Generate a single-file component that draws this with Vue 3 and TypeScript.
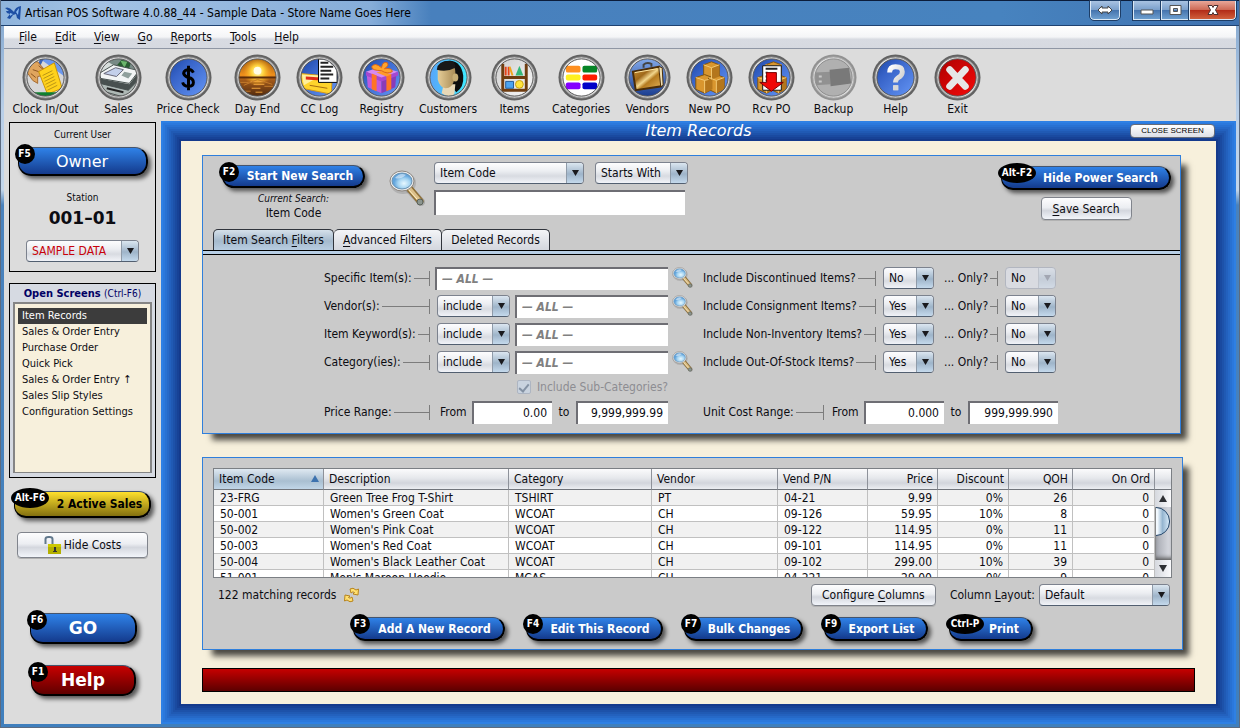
<script setup lang="ts">
import { ref } from 'vue'

interface Tool { id: string; label: string; size?: string; disabled?: boolean }
interface FilterRow { id: string; label: string; mode: boolean; lookup: boolean }
interface IncludeRow { id: string; label: string; value: string; locked?: boolean }
interface Action { key: string; label: string; size: string; oval?: boolean }

const menus = ['File', 'Edit', 'View', 'Go', 'Reports', 'Tools', 'Help']

const tools: Tool[] = [
  { id: 'clock', label: 'Clock In/Out', size: 'xl' },
  { id: 'sales', label: 'Sales' },
  { id: 'price', label: 'Price Check', size: 'lg' },
  { id: 'day', label: 'Day End' },
  { id: 'log', label: 'CC Log' },
  { id: 'registry', label: 'Registry' },
  { id: 'customers', label: 'Customers', size: 'md' },
  { id: 'items', label: 'Items' },
  { id: 'categories', label: 'Categories', size: 'md' },
  { id: 'vendors', label: 'Vendors' },
  { id: 'newpo', label: 'New PO' },
  { id: 'rcvpo', label: 'Rcv PO' },
  { id: 'backup', label: 'Backup', disabled: true },
  { id: 'help', label: 'Help' },
  { id: 'exit', label: 'Exit' },
]

const screens = [
  'Item Records', 'Sales & Order Entry', 'Purchase Order', 'Quick Pick',
  'Sales & Order Entry ↑', 'Sales Slip Styles', 'Configuration Settings',
]
const current = ref(0)
const tab = ref(0)

const filters: FilterRow[] = [
  { id: 'specific', label: 'Specific Item(s):', mode: false, lookup: true },
  { id: 'vendor', label: 'Vendor(s):', mode: true, lookup: true },
  { id: 'keyword', label: 'Item Keyword(s):', mode: true, lookup: false },
  { id: 'category', label: 'Category(ies):', mode: true, lookup: true },
]
const includes: IncludeRow[] = [
  { id: 'disc', label: 'Include Discontinued Items?', value: 'No', locked: true },
  { id: 'cons', label: 'Include Consignment Items?', value: 'Yes' },
  { id: 'noninv', label: 'Include Non-Inventory Items?', value: 'Yes' },
  { id: 'oos', label: 'Include Out-Of-Stock Items?', value: 'Yes' },
]

const heads = ['Item Code', 'Description', 'Category', 'Vendor', 'Vend P/N', 'Price', 'Discount', 'QOH', 'On Ord']
const rows = [
  ['23-FRG', 'Green Tree Frog T-Shirt', 'TSHIRT', 'PT', '04-21', '9.99', '0%', '26', '0'],
  ['50-001', "Women's Green Coat", 'WCOAT', 'CH', '09-126', '59.95', '10%', '8', '0'],
  ['50-002', "Women's Pink Coat", 'WCOAT', 'CH', '09-122', '114.95', '0%', '11', '0'],
  ['50-003', "Women's Red Coat", 'WCOAT', 'CH', '09-101', '114.95', '0%', '11', '0'],
  ['50-004', "Women's Black Leather Coat", 'WCOAT', 'CH', '09-102', '299.00', '10%', '39', '0'],
  ['51-001', "Men's Maroon Hoodie", 'MCAS', 'CH', '04-221', '29.00', '0%', '9', '0'],
]

const actions: Action[] = [
  { key: 'F3', label: 'Add A New Record', size: 'a' },
  { key: 'F4', label: 'Edit This Record', size: 'b' },
  { key: 'F7', label: 'Bulk Changes', size: 'c' },
  { key: 'F9', label: 'Export List', size: 'd' },
  { key: 'Ctrl-P', label: 'Print', size: 'e', oval: true },
]
</script>

<template>
  <div class="window">
    <svg class="defs" aria-hidden="true">
      <defs>
        <linearGradient id="rim" x1="0" y1="0" x2="1" y2="1"><stop offset="0" stop-color="#fff" /><stop offset=".5" stop-color="#bbb" /><stop offset="1" stop-color="#f4f4f4" /></linearGradient>
        <linearGradient id="blue" x1="0" y1="0" x2="1" y2="1"><stop offset="0" stop-color="#123a94" /><stop offset=".35" stop-color="#3763c8" /><stop offset="1" stop-color="#6ea0ff" /></linearGradient>
        <linearGradient id="navy" x1="0" y1="0" x2="0" y2="1"><stop offset="0" stop-color="#8fb6f4" /><stop offset="1" stop-color="#0c2f84" /></linearGradient>
        <linearGradient id="pale" x1="0" y1="0" x2="1" y2="1"><stop offset="0" stop-color="#c8c8c8" /><stop offset="1" stop-color="#fff" /></linearGradient>
        <linearGradient id="sky" x1="0" y1="0" x2="0" y2="1"><stop offset="0" stop-color="#7a430c" /><stop offset=".45" stop-color="#f0901c" /><stop offset=".55" stop-color="#a35a1a" /><stop offset="1" stop-color="#3a1d0c" /></linearGradient>
        <radialGradient id="sun"><stop offset="0" stop-color="#fffde0" /><stop offset=".4" stop-color="#ffd640" /><stop offset="1" stop-color="#ffa51a" stop-opacity="0" /></radialGradient>
        <linearGradient id="cyan"><stop offset="0" stop-color="#5b9cf8" /><stop offset="1" stop-color="#3cf2ff" /></linearGradient>
        <linearGradient id="face"><stop offset="0" stop-color="#e5cd98" /><stop offset="1" stop-color="#a98b55" /></linearGradient>
        <linearGradient id="gold" x1="0" y1="0" x2="1" y2="1"><stop offset="0" stop-color="#c98f34" /><stop offset=".35" stop-color="#a0691a" /><stop offset=".5" stop-color="#f2d68c" /><stop offset=".6" stop-color="#b57b20" /><stop offset="1" stop-color="#e6b65c" /></linearGradient>
        <linearGradient id="red" x1="0" y1="0" x2="1" y2="1"><stop offset="0" stop-color="#a40000" /><stop offset="1" stop-color="#ff0a0a" /></linearGradient>
        <linearGradient id="white" x1="0" y1="0" x2="1" y2="1"><stop offset="0" stop-color="#fff" /><stop offset="1" stop-color="#c4c4c4" /></linearGradient>
        <radialGradient id="lens" cx=".6" cy=".65"><stop offset="0" stop-color="#e8f8ff" /><stop offset=".6" stop-color="#a5d4f2" /><stop offset="1" stop-color="#62a4dc" /></radialGradient>
        <clipPath id="disc"><circle cx="24" cy="24" r="19" /></clipPath>
        <symbol id="magnifier" viewBox="0 0 36 38">
          <ellipse cx="14" cy="13" rx="13" ry="11" fill="#666" opacity=".25" />
          <path d="M20 19 32 32" stroke="#777" stroke-width="8" stroke-linecap="round" opacity=".35" />
          <path d="M20 18 31 31" stroke="#8f7038" stroke-width="7" stroke-linecap="round" />
          <path d="M20 18 31 31" stroke="#dcc08a" stroke-width="4" stroke-linecap="round" />
          <path d="m19 19 9 10" stroke="#fff0c4" stroke-width="1" />
          <circle cx="31" cy="32" r="3" fill="#8c9690" stroke="#596058" />
          <ellipse cx="13" cy="11" rx="12" ry="10" fill="#eee" stroke="#8c8680" />
          <ellipse cx="13" cy="11" rx="10" ry="8" fill="url(#lens)" stroke="#6b92b0" />
          <path d="M6 8q5-6 11-3-6 5-11 3z" fill="#fff" opacity=".5" />
        </symbol>
      </defs>
    </svg>

    <header class="titlebar">
      <svg class="logo" viewBox="0 0 16 14" aria-hidden="true">
        <path d="M0 2q4-2 8 3l1 1q1-5 7-6l-1 14-3-2-1-4-3 1-3 4-3-1 3-4-3-1-1-2 3 0z" fill="#1e4fa4" />
        <path d="M5 7 8 8 5 10zM11 6l3-4-1 7z" fill="#8fbdf0" />
      </svg>
      <h1>Artisan POS Software 4.0.88_44 - Sample Data - Store Name Goes Here</h1>
      <div class="captions">
        <button class="cap span" aria-label="Move window">
          <svg viewBox="0 0 16 10"><path d="M1 5 5 1v2h6V1l4 4-4 4V7H5v2z" fill="#fff" stroke="#444" /></svg>
        </button>
        <div class="cap-group">
          <button class="cap" aria-label="Minimize"><svg viewBox="0 0 16 10"><path d="M2 5h12v4H2z" fill="#fff" stroke="#555" /></svg></button>
          <button class="cap" aria-label="Maximize"><svg viewBox="0 0 16 10"><path d="M3 .5h11v9H3zM6.500 3.500h4v3h-4z" fill="#fff" fill-rule="evenodd" stroke="#555" /></svg></button>
          <button class="cap close" aria-label="Close"><svg viewBox="0 0 16 10"><path d="M3 .5h4l1 2 1-2h4L10.500 5 13 9.500H9l-1-2-1 2H3L5.500 5z" fill="#fff" stroke="#4c3030" /></svg></button>
        </div>
      </div>
    </header>

    <nav class="menubar">
      <button v-for="m in menus" :key="m"><u>{{ m[0] }}</u>{{ m.slice(1) }}</button>
    </nav>

    <div class="toolbar">
      <button v-for="t in tools" :key="t.id" class="tool" :class="[t.size, { faded: t.disabled }]">
        <svg viewBox="0 0 48 48" aria-hidden="true">
          <circle cx="24" cy="24" r="23.500" fill="#626262" />
          <circle cx="24" cy="24" r="21" fill="url(#rim)" stroke="#8a8a8a" />
          <g clip-path="url(#disc)">
            <g v-if="t.id === 'clock'">
              <path d="M0 0h48v48H0z" fill="#d8d8d8" /><path d="M17 4h28v20z" fill="#6c98ee" /><path d="m17 12 4-8" stroke="#3c64b8" stroke-width="3" />
              <path d="M3 8 16 8 23 16 21 22 16 23 16 30 11 27 6 20z" fill="#e0a55e" stroke="#a66c30" />
              <path d="m11 16 6 2M9 20l5 4M17 12l5 4" stroke="#8a5421" />
              <path d="M17 18 33 9 41 35 26 41z" fill="#ffd21c" stroke="#c99308" />
              <path d="m21 22 10-5M22 25l10-5M23 28l10-5M24 31l10-5M25 34l10-5M26 37l10-5" stroke="#b89416" />
              <path d="M0 39h48v9H0z" fill="#108030" />
            </g>
            <g v-else-if="t.id === 'sales'">
              <path d="M0 0h48v48H0z" fill="#d8dedc" /><path d="M6 4h38v12L20 12z" fill="#788a86" />
              <path d="m22 12 5-6 10 2-3 9z" fill="#285c30" /><path d="m26 7 7 1-3 6z" fill="#6ab56a" />
              <path d="m4 20 15-9 26 6-10 13-29-5z" fill="#f2f5f5" stroke="#46504e" /><path d="m9 20 12-6 8 2-7 7z" fill="#c3d0ea" stroke="#667" /><path d="m27 22 3-4 8 2-4 5z" fill="#8fa09c" />
              <path d="m5 25 30 6 10-13v7L35 38 5 31z" fill="#48504f" /><path d="m5 30 29 7 11-11v12L33 45 8 38z" fill="#aeb8b5" stroke="#48504f" /><path d="m12 35 17 4" stroke="#222" stroke-width="2" />
            </g>
            <g v-else-if="t.id === 'price'">
              <path d="M0 0h48v48H0z" fill="url(#blue)" />
              <path d="M29 19q-2-4-6-3-4 1-4 4 1 3 5 4 5 1 5 5 0 4-5 4t-6-4M24 12v25" fill="none" stroke="#000" stroke-width="3" />
            </g>
            <g v-else-if="t.id === 'day'">
              <path d="M0 0h48v48H0z" fill="url(#sky)" /><circle cx="24" cy="18" r="15" fill="url(#sun)" /><circle cx="24" cy="17" r="4" fill="#fffde8" />
              <path d="M0 24h48" stroke="#5c2c0a" stroke-width="2" /><path d="M17 28h14M20 31h11M18 35h9M22 39h7" stroke="#f0a43c" stroke-width="1" />
              <path d="M4 29h11M31 33h12M6 38h11M24 26 10 32M24 26l15 5" stroke="#c47a2a" />
            </g>
            <g v-else-if="t.id === 'log'">
              <path d="M0 0h48v48H0z" fill="url(#blue)" /><path d="m5 20 32 3-1 18-30-6z" fill="#ffd42c" stroke="#d79a14" /><path d="m6 21 20 1-18 10z" fill="#ffef9c" /><path d="m10 23 15 1v3l-15-1z" fill="#e02c18" /><path d="m14 32 18 3" stroke="#a66b12" />
              <path d="M23 5h19v24H23z" fill="#fff" stroke="#000" /><path d="M25 9h8M25 13h13M25 17h11M25 21h13M25 25h9" stroke="#222" stroke-width="2" /><path d="M36 5v5h6" fill="none" stroke="#000" />
            </g>
            <g v-else-if="t.id === 'registry'">
              <path d="M0 0h48v48H0z" fill="url(#blue)" /><path d="m9 22 15 5v13L10 34z" fill="#c05ade" /><path d="m24 27 15-5-1 12-14 6z" fill="#8a3bb8" />
              <path d="m8 18 15-5 18 5-17 7z" fill="#d68af0" /><path d="m8 18 16 6v4L8 22zM41 18l-17 6v4l17-6z" fill="#a647d0" />
              <path d="m14 20 5 2v16l-5-2zM29 22l5-2v16l-5 2z" fill="#ff7426" /><path d="m24 17 10 4-5 2-10-4z" fill="#ff9a2c" />
              <path d="M24 17q-10 0-10-4 3-5 10 1 1-7 6-5 2 3-3 6 8-1 8 3-5 3-11-1z" fill="#ffa42c" stroke="#d8631a" />
            </g>
            <g v-else-if="t.id === 'customers'">
              <path d="M0 0h48v48H0z" fill="url(#cyan)" />
              <path d="M14 15q1-8 12-8 11 1 13 15 1 12-7 17l-7-8z" fill="#0d0d0d" />
              <path d="M19 31h12l-1 10-6 3-7-4z" fill="#e8d8b6" />
              <path d="M13 16q10 1 17-3 2 6 0 13-2 9-9 9-6-1-8-9z" fill="url(#face)" /><ellipse cx="31" cy="24" rx="3" ry="4" fill="#c7ad74" />
              <path d="M12 16q1-9 13-9 6 0 6 7-9 5-19 2z" fill="#181818" />
            </g>
            <g v-else-if="t.id === 'items'">
              <path d="M0 0h48v48H0z" fill="url(#pale)" /><path d="M12 10v28M36 10v28M11 24h26M11 37h26" stroke="#6f3d10" stroke-width="3" />
              <path d="M15 13v9M18 13v9" stroke="#e44218" stroke-width="2" /><path d="m19 13 3 9" stroke="#f0a418" stroke-width="2" /><path d="m29 12 4 10h-8z" fill="#35b878" />
              <path d="M15 28h8v7h-8z" fill="#4ba3f0" stroke="#225a98" /><circle cx="29" cy="31" r="4" fill="#ffe33c" stroke="#c8a010" />
            </g>
            <g v-else-if="t.id === 'categories'">
              <path d="M0 0h48v48H0z" fill="#fff" />
              <rect x="8" y="12" width="15" height="7" rx="2" fill="#ff9020" /><rect x="25" y="12" width="15" height="7" rx="2" fill="#068426" />
              <rect x="8" y="21" width="15" height="6" rx="2" fill="#fff020" /><rect x="25" y="21" width="15" height="6" rx="2" fill="#ff1c00" />
              <rect x="8" y="29" width="15" height="7" rx="2" fill="#8400ff" /><rect x="25" y="29" width="15" height="7" rx="2" fill="#0000c8" />
            </g>
            <g v-else-if="t.id === 'vendors'">
              <path d="M0 0h48v48H0z" fill="url(#navy)" /><path d="M20 14v-3q3-3 8-1v3" fill="none" stroke="#444" stroke-width="2" />
              <path d="m9 18 27-5 2 20-26 4z" fill="url(#gold)" stroke="#4b2d08" stroke-width="2" /><path d="m11 19 23-4" stroke="#ffe7a4" /><path d="m36 13 3 1 1 18-2 1" fill="#efe0b4" stroke="#4b2d08" />
            </g>
            <g v-else-if="t.id === 'newpo' || t.id === 'rcvpo'">
              <path d="M0 0h48v48H0z" fill="url(#blue)" />
              <g stroke="#815510" fill="#d9962e"><path d="m18 11 8-3 8 3v12l-8 3-8-3z" /><path d="m10 24 9-3 8 3v12l-8 4-9-4z" /><path d="m23 24 8-3 8 3v12l-8 4-8-4z" /></g>
              <path d="m26 14 8-3v12l-8 3zM19 27l8-3v12l-8 4zM31 27l8-3v12l-8 4z" fill="#b4761c" />
              <path d="m18 11 8 3 8-3M10 24l9 3 4-1M23 24l8 3 8-3M19 27v13M31 27v13M26 14v12" fill="none" stroke="#f4ca74" />
              <g v-if="t.id === 'rcvpo'"><path d="M15 12h19v25H15z" fill="#fff" stroke="#111" /><path d="M18 15h12M18 19h2M18 23h2M18 27h2" stroke="#222" stroke-width="2" /><path d="M19 19h10v10h7L24 38 12 29h7z" fill="#f00808" stroke="#700" /></g>
            </g>
            <g v-else-if="t.id === 'backup'"><path d="M0 0h48v48H0z" fill="#949494" /><path d="m5 19 16-1v13l-15 1z" fill="#606060" /><path d="M9 22h3v2H9zM9 27h3v2H9z" fill="#bbb" /><path d="m20 16 20-2 2 16-21 3z" fill="#383838" /></g>
            <g v-else-if="t.id === 'help'"><path d="M0 0h48v48H0z" fill="url(#blue)" /><path d="M18 19q0-6 6-6 7 0 7 5 0 4-4 6-3 2-3 5M24 32v5" fill="none" stroke="url(#white)" stroke-width="5" /><path d="M22 32h5v5h-5z" fill="#d8d8d8" /></g>
            <g v-else><path d="M0 0h48v48H0z" fill="url(#red)" /><path d="m16 16 16 17M32 16 16 33" stroke="#e6e6e6" stroke-width="7" stroke-linecap="round" /></g>
          </g>
          <circle cx="24" cy="24" r="19" fill="none" stroke="#555" />
        </svg>
        <span>{{ t.label }}</span>
      </button>
    </div>

    <div class="body">
      <aside class="sidebar">
        <section class="box user">
          <p class="small">Current User</p>
          <button class="pill owner"><span class="badge">F5</span>Owner</button>
          <p class="small station">Station</p>
          <p class="number">001–01</p>
          <span class="combo sample"><select aria-label="Database"><option>SAMPLE DATA</option></select></span>
        </section>
        <section class="box open">
          <h2>Open Screens <span>(Ctrl-F6)</span></h2>
          <ul>
            <li v-for="(s, i) in screens" :key="i"><button :class="{ on: current === i }" @click="current = i">{{ s }}</button></li>
          </ul>
        </section>
        <button class="pill gold"><span class="badge oval">Alt-F6</span>2 Active Sales</button>
        <button class="plain hide-costs">
          <svg viewBox="0 0 17 19" aria-hidden="true"><path d="M1.500 8V3q0-2 3-2h1q3 0 3 2v6" fill="none" stroke="#61788c" stroke-width="2" /><path d="M4 8h13v10H4z" fill="#b4b000" /><path d="M4 8h13v3H4z" fill="#ccc800" /><path d="M10 11h2v5h-2zM9 15h4v1H9z" fill="#333" /></svg>
          Hide Costs
        </button>
        <button class="pill go"><span class="badge">F6</span>GO</button>
        <button class="pill help"><span class="badge">F1</span>Help</button>
      </aside>

      <main class="frame">
        <div class="frame-title">
          <h2>Item Records</h2>
          <button>CLOSE SCREEN</button>
        </div>
        <div class="canvas">
          <section class="panel search">
            <div class="search-top">
              <div class="starter">
                <button class="pill start"><span class="badge">F2</span>Start New Search</button>
                <em>Current Search:</em>
                <span class="current">Item Code</span>
              </div>
              <svg class="big-mag" aria-hidden="true"><use href="#magnifier" /></svg>
              <div class="query">
                <div class="query-row">
                  <span class="combo code"><select aria-label="Search field"><option>Item Code</option></select></span>
                  <span class="combo starts"><select aria-label="Match type"><option>Starts With</option></select></span>
                </div>
                <input class="field query-text" type="text" aria-label="Search text">
              </div>
              <div class="power">
                <button class="pill hide-power"><span class="badge oval">Alt-F2</span>Hide Power Search</button>
                <button class="plain save"><span><u>S</u>ave Search</span></button>
              </div>
            </div>

            <div class="tabs" role="tablist">
              <button role="tab" :class="{ on: tab === 0 }" @click="tab = 0">Item Search <u>F</u>ilters</button>
              <button role="tab" :class="{ on: tab === 1 }" @click="tab = 1"><u>A</u>dvanced Filters</button>
              <button role="tab" :class="{ on: tab === 2 }" @click="tab = 2">Deleted Records</button>
            </div>
            <div class="tab-line"></div>

            <div class="filters">
              <div class="left">
                <div v-for="f in filters" :key="f.id" class="row">
                  <label class="lead" :for="f.id">{{ f.label }}<i class="rule"></i></label>
                  <span v-if="f.mode" class="combo mode"><select :aria-label="f.label + ' mode'"><option>include</option></select></span>
                  <input :id="f.id" class="field all" :class="{ long: !f.mode }" type="text" placeholder="— ALL —">
                  <button v-if="f.lookup" class="lookup" :aria-label="'Look up ' + f.label"><svg aria-hidden="true"><use href="#magnifier" /></svg></button>
                </div>
                <div class="row sub"><label><input type="checkbox" checked disabled><span class="tick"></span>Include Sub-Categories?</label></div>
                <div class="row">
                  <span class="lead">Price Range:<i class="rule"></i></span>
                  <label class="from" for="p1">From</label><input id="p1" class="field num n80" type="text" value="0.00">
                  <label class="to" for="p2">to</label><input id="p2" class="field num n92" type="text" value="9,999,999.99">
                </div>
              </div>
              <div class="right">
                <div v-for="n in includes" :key="n.id" class="row">
                  <label class="lead wide" :for="n.id">{{ n.label }}<i class="rule"></i></label>
                  <span class="combo yn"><select :id="n.id"><option>{{ n.value }}</option></select></span>
                  <label class="only" :for="n.id + '-only'">... Only?<i class="rule"></i></label>
                  <span class="combo yn" :class="{ off: n.locked }"><select :id="n.id + '-only'" :disabled="n.locked"><option>No</option></select></span>
                </div>
                <div class="row sub"></div>
                <div class="row">
                  <span class="lead cost">Unit Cost Range:<i class="rule"></i></span>
                  <label class="from" for="c1">From</label><input id="c1" class="field num n80" type="text" value="0.000">
                  <label class="to" for="c2">to</label><input id="c2" class="field num n90" type="text" value="999,999.990">
                </div>
              </div>
            </div>
          </section>

          <section class="panel results">
            <div class="grid">
              <div class="viewport">
                <table>
                  <colgroup><col class="c110"><col><col class="c143"><col class="c126"><col class="c90"><col class="c70"><col class="c71"><col class="c64"><col class="c82"></colgroup>
                  <thead><tr><th v-for="(h, i) in heads" :key="h" scope="col" :class="{ r: i > 4, sorted: i === 0 }">{{ h }}</th></tr></thead>
                  <tbody><tr v-for="r in rows" :key="r[0]"><td v-for="(c, i) in r" :key="i" :class="{ r: i > 4 }">{{ c }}</td></tr></tbody>
                </table>
              </div>
              <div class="scroll">
                <div class="corner"></div>
                <button class="up" aria-label="Scroll up"></button>
                <div class="track"><div class="thumb"></div></div>
                <button class="down" aria-label="Scroll down"></button>
              </div>
            </div>
            <div class="status">
              <span>122 matching records</span>
              <button class="refresh" aria-label="Refresh"><svg viewBox="0 0 15 16"><path d="M6 2q3-2 6 1l2.500-1-.5 6-5-1 1.500-1.500Q9 4 7 6z" fill="#ffe070" stroke="#b8841c" /><path d="M9 14q-3 2-6-1L.5 14 1 8l5 1-1.500 1.500Q6 12 8 10z" fill="#ffe070" stroke="#b8841c" /></svg></button>
              <button class="plain configure"><span>Configure <u>C</u>olumns</span></button>
              <label for="layout">Column <u>L</u>ayout:</label>
              <span class="combo layout"><select id="layout"><option>Default</option></select></span>
            </div>
            <div class="actions">
              <button v-for="a in actions" :key="a.key" class="pill" :class="'w-' + a.size"><span class="badge" :class="{ oval: a.oval }">{{ a.key }}</span>{{ a.label }}</button>
            </div>
          </section>
          <div class="message"></div>
        </div>
      </main>
    </div>
  </div>
</template>

<style>
html, body { margin: 0; background: #4b82bd; }
</style>

<style scoped>
* { box-sizing: border-box; }
.window {
  min-height: 100vh; display: flex; flex-direction: column; padding: 0 3px 3px; position: relative;
  background: linear-gradient(#7ca2cc, #b9cfe8 110px, #c3d6ea 190px, #4a82bc 205px, #3f7fbd);
  font: 12px/16px 'DejaVu Sans Condensed', 'DejaVu Sans', sans-serif; color: #0c0c12;
  border-left: 1px solid #5c6b80; border-right: 1px solid #5c6b80; border-bottom: 1px solid #5c6b80;
}
.defs { position: absolute; width: 0; height: 0; }
button, input, select { font: inherit; color: inherit; margin: 0; }
button { padding: 0; border: 0; background: none; white-space: nowrap; }
p, h1, h2, ul { margin: 0; padding: 0; }
u { text-underline-offset: 2px; }

.titlebar {
  display: flex; height: 26px; margin: 0 -3px; padding: 0 3px 0 4px; border-top: 1px solid #0b1c3a; border-bottom: 1px solid #1f4271;
  background: linear-gradient(90deg, #8fb4dc, #a3c2e4 100px, #86add9 370px, #4880bd 430px, #4783bf 1000px, #3f72b0);
}
.logo { width: 16px; height: 14px; margin-top: 5px; }
.titlebar h1 { flex: 1; font-size: 12px; font-weight: 400; line-height: 24px; margin-left: 4px; color: #000; }
.captions { display: flex; gap: 13px; }
.cap-group { display: flex; }
.cap { width: 28px; height: 19px; display: grid; place-items: center; border: 1px solid #dce9f6; border-top: 0; outline: 1px solid #1d3d66; background: linear-gradient(#a9c3e2, #7ba0cc 48%, #4674ae 52%, #6e9fcf); }
.cap svg { width: 16px; height: 10px; }
.cap.span { width: 30px; border-radius: 0 0 4px 4px; }
.cap.close { width: 47px; border-radius: 0 0 4px 0; background: linear-gradient(#e8a799, #ce6a56 48%, #b22c18 52%, #d0603c); }

.menubar { display: flex; gap: 18px; height: 23px; padding: 0 15px; background: linear-gradient(#fff, #f4f5f7 50%, #d8dbe2 60%, #d6d9e0); border-bottom: 1px solid #8f96a4; }
.menubar button { line-height: 21px; }

.toolbar { display: flex; gap: 15px; height: 72px; padding: 5px 7px 0; background: #dcdcdc; }
.tool { width: 47px; flex: none; display: flex; flex-direction: column; align-items: center; }
.tool.xl { width: 69px; } .tool.lg { width: 62px; } .tool.md { width: 56px; }
.tool svg { width: 47px; height: 47px; flex: none; }
.tool span { line-height: 17px; }
.faded svg { opacity: .6; }

.body { flex: 1; display: flex; background: #dcdcdc; }
.sidebar { width: 157px; flex: none; padding: 1px 5px 0; display: flex; flex-direction: column; }
.box { border: 1px solid #000; display: flex; flex-direction: column; align-items: center; }
.user { height: 150px; }
.small { font-size: 10px; line-height: 14px; margin-top: 5px; }
.station { margin-top: 15px; }
.number { font: bold 17px/22px 'DejaVu Sans', sans-serif; margin-top: 2px; margin-bottom: 11px; }
.open { height: 195px; margin-top: 11px; background: #d6dae2; padding: 2px 3px 4px; align-items: stretch; }
.open h2 { font-size: 11px; line-height: 16px; text-align: center; color: #000064; white-space: nowrap; }
.open h2 span { font-weight: 400; font-size: 10px; }
.open ul { flex: 1; list-style: none; background: #f7f0dc; border: 2px solid #858585; border-bottom-width: 1px; padding: 4px 3px; }
.open li button { display: block; width: 100%; height: 16px; line-height: 16px; font-size: 11px; text-align: left; padding-left: 4px; color: #0c0c12; }
.open li .on { background: #3c3c3c; color: #fff; }

.pill {
  position: relative; height: 24px; flex: none; border: 1px solid #000; border-top-color: #45556e; border-right-width: 2px; border-bottom-width: 2px; border-radius: 12px;
  background: linear-gradient(#2f82e8, #143a8c); color: #fff; font-weight: bold; text-align: center; padding-left: 14px; box-shadow: 3px 3px 4px rgba(0, 0, 0, .6);
}
.badge { position: absolute; left: -4px; top: -4px; width: 20px; height: 20px; border-radius: 50%; background: #000; color: #fff; font: bold 10px/20px 'DejaVu Sans Condensed', sans-serif; text-align: center; }
.badge.oval { width: 38px; }
.owner { width: 130px; height: 29px; margin-top: 5px; padding-left: 0; font: 16px 'DejaVu Sans', sans-serif; border-radius: 13px; }
.gold { width: 137px; height: 27px; margin: 13px 0 0 5px; padding-left: 35px; background: linear-gradient(#ffe02c, #837010); color: #000; }
.go, .help { height: 31px; padding: 0; border-radius: 13px; font: bold 17px 'DejaVu Sans', sans-serif; }
.go { width: 107px; margin: 55px 0 0 21px; }
.help { width: 105px; margin: 21px 0 0 22px; background: linear-gradient(#c80000, #600000); }
.plain { display: flex; align-items: center; justify-content: center; border: 1px solid #80848c; border-radius: 4px; background: linear-gradient(#fdfdfe, #eceef2 45%, #d4d7de 60%, #f2f5fa); box-shadow: 0 1px 0 #b2b2b2; }
.hide-costs { width: 131px; height: 26px; margin: 14px 0 0 8px; gap: 3px; }
.hide-costs svg { width: 17px; height: 19px; }

.combo { position: relative; flex: none; display: block; height: 22px; border: 1px solid #7c828e; border-bottom-color: #525f70; border-radius: 4px; overflow: hidden; background: linear-gradient(#fdfdfe, #eceef2 40%, #d8dbe1 65%, #f1f3f8); }
.combo select { appearance: none; display: block; width: 100%; height: 20px; border: 0; background: none; padding: 0 18px 0 5px; outline: 0; opacity: 1; white-space: nowrap; }
.combo::before { content: ''; position: absolute; right: 0; top: 0; bottom: 0; width: 16px; border-left: 1px solid #8f9ba9; background: linear-gradient(#dbe6f0, #9eb4c9 55%, #c4d9ec); pointer-events: none; }
.combo::after { content: ''; position: absolute; right: 4px; top: 7px; width: 7px; height: 6px; background: #1a1a1e; clip-path: polygon(0 0, 100% 0, 50% 100%); pointer-events: none; }
.combo.off { border-color: #b2b6c0; background: #d9dbe1; }
.combo.off::before { opacity: .35; } .combo.off::after { background: #a2a6b2; }
.sample { width: 113px; color: #c8000a; }

.frame {
  flex: 1; min-width: 0; padding: 0 20px 20px; display: flex; flex-direction: column; background: #143a8c;
  box-shadow: inset 0 0 0 2px #2e80e4, inset 0 0 0 4px #2b78dc, inset 0 0 0 6px #2871d2, inset 0 0 0 8px #2669c8, inset 0 0 0 10px #2361be, inset 0 0 0 12px #205ab4, inset 0 0 0 14px #1d52aa, inset 0 0 0 16px #1a4aa0, inset 0 0 0 18px #174296, inset 0 0 0 20px #143a8c;
}
.frame-title { height: 20px; display: grid; grid-template-columns: 86px 1fr 86px; flex: none; }
.frame-title h2 { grid-column: 2; text-align: center; font: italic 16px/20px 'DejaVu Sans', sans-serif; color: #fff; }
.frame-title button { width: 85px; height: 14px; margin: 3px 0 0; border: 1px solid #666b78; border-radius: 4px; background: linear-gradient(#fff, #dcdfe6); font: 8px/12px 'Liberation Sans', Arial, sans-serif; color: #000; }
.canvas { flex: 1; background: #f7f0dc; padding: 14px 21px 12px; display: flex; flex-direction: column; }
.panel { border: 1px solid #2f7fdc; background: #cacaca; box-shadow: 8px 8px 6px -2px rgba(0, 0, 0, .7); }
.search { margin-right: 14px; }
.search-top { display: flex; padding: 6px 9px 0 17px; height: 73px; }
.starter { width: 147px; display: flex; flex-direction: column; align-items: center; }
.start { width: 143px; height: 23px; margin: 3px 0 4px; }
.starter em { font-size: 10px; line-height: 14px; }
.current { line-height: 14px; }
.big-mag { width: 36px; height: 38px; margin: 8px 9px 0 22px; flex: none; }
.query { display: flex; flex-direction: column; gap: 6px; }
.query-row { display: flex; gap: 11px; }
.code { width: 150px; } .starts { width: 93px; }
.field { flex: none; height: 23px; border: 0; border-top: 2px solid #6e6e74; border-left: 2px solid #6e6e74; border-radius: 0; background: #fff; padding: 0 5px; outline: 0; }
.query-text { width: 251px; height: 25px; }
.power { margin-left: auto; display: flex; flex-direction: column; align-items: center; padding-top: 4px; gap: 7px; }
.hide-power { width: 170px; padding-left: 30px; }
.save { width: 91px; height: 23px; }

.tabs { display: flex; height: 21px; padding-left: 10px; }
.tabs button { height: 21px; line-height: 20px; border: 1px solid #30343c; border-bottom: 0; border-left-width: 0; border-radius: 5px 5px 0 0; background: linear-gradient(#f4f5f8, #dcdfe5 70%, #d4d7de); width: 108px; }
.tabs button:first-child { width: 121px; border-left-width: 1px; }
.tabs .on { background: linear-gradient(#d5e0ea, #a5bacd 55%, #b8cde1); }
.tab-line { height: 5px; background: #b8cfe6; border-top: 1px solid #000; border-bottom: 1px solid #000; }
.filters { display: flex; padding: 9px 0 7px 121px; }
.left { width: 379px; flex: none; }
.row { display: flex; align-items: center; height: 28px; }
.row .combo.mode { margin: 0 5px 0 7px; }
.lead { width: 106px; flex: none; display: flex; align-items: center; gap: 2px; white-space: nowrap; }
.rule { flex: 1; min-width: 5px; height: 15px; border-right: 1px solid #7c7c7c; background: linear-gradient(#7c7c7c, #7c7c7c) center / 100% 1px no-repeat; }
.mode { width: 73px; }
.all { width: 153px; }
.all.long { width: 233px; margin-left: 5px; }
.all::placeholder { color: #808080; font-weight: bold; font-style: italic; opacity: 1; }
.lookup { width: 21px; height: 22px; margin-left: 4px; }
.lookup svg { width: 21px; height: 22px; display: block; }
.sub { height: 22px; justify-content: flex-end; padding-right: 35px; color: #8d8d92; }
.sub label { display: flex; align-items: center; gap: 6px; }
.sub input { position: absolute; opacity: 0; width: 14px; height: 14px; }
.tick { width: 14px; height: 14px; border: 1px solid #adb5c2; border-radius: 2px; background: #c9d3df; display: grid; place-items: center; }
.tick::before { content: ''; width: 4px; height: 8px; border: solid #8492a4; border-width: 0 2px 2px 0; transform: rotate(40deg); }
.from { width: 42px; padding-left: 10px; }
.to { width: 24px; text-align: center; }
.num { text-align: right; }
.n80 { width: 80px; } .n92 { width: 92px; } .n90 { width: 90px; }
.wide { width: 173px; margin-right: 7px; }
.yn { width: 51px; }
.only { width: 64px; margin: 0 7px 0 0; padding-left: 10px; display: flex; align-items: center; gap: 2px; white-space: nowrap; }
.cost { width: 121px; }
.cost + .from { width: 40px; padding-left: 8px; }

.results { margin: 23px 12px 0 0; padding: 10px 10px 8px; }
.grid { height: 110px; display: flex; border: 1px solid #7b7f84; background: #fff; }
.viewport { flex: 1; min-width: 0; overflow: hidden; }
table { width: 100%; table-layout: fixed; border-collapse: separate; border-spacing: 0; }
.c110 { width: 110px; } .c143 { width: 143px; } .c126 { width: 126px; } .c90 { width: 90px; } .c70 { width: 70px; } .c71 { width: 71px; } .c64 { width: 64px; } .c82 { width: 82px; }
th { height: 21px; padding: 0 4px 0 5px; font-weight: 400; text-align: left; border-right: 1px solid #8e929a; border-bottom: 1px solid #71757c; background: linear-gradient(#fbfbfc, #e6e8ec 45%, #d2d5dc 70%, #eceef2); }
th.sorted { background: linear-gradient(#dfe9f1, #a9bfd1 60%, #c1d6e8); position: relative; }
th.sorted::after { content: ''; position: absolute; right: 4px; top: 6px; width: 8px; height: 7px; background: #3d72ae; clip-path: polygon(50% 0, 100% 100%, 0 100%); }
td { height: 16px; line-height: 13px; padding: 2px 5px 0 6px; border-right: 1px solid #c0c0c0; border-bottom: 1px solid #c0c0c0; background: #fff; white-space: nowrap; }
tr:nth-child(odd) td { background: #f1f1f1; }
.r { text-align: right; }
.scroll { width: 16px; flex: none; display: flex; flex-direction: column; background: #d5d8de; }
.corner { height: 21px; background: linear-gradient(#fbfbfc, #e6e8ec 45%, #d2d5dc 70%, #eceef2); border-bottom: 1px solid #71757c; }
.scroll button { height: 17px; display: grid; place-items: center; background: linear-gradient(90deg, #d5d8de, #fafafc); }
.scroll button::before { content: ''; width: 8px; height: 7px; background: #2e3034; clip-path: polygon(50% 0, 100% 100%, 0 100%); }
.scroll .down::before { clip-path: polygon(0 0, 100% 0, 50% 100%); }
.track { flex: 1; overflow: hidden; border-left: 1px solid #888; background: linear-gradient(90deg, #a7aab2, #dcdee4); box-shadow: inset 0 -4px 4px -2px #555; }
.thumb { height: 29px; width: 28px; margin-left: -14px; border: 1px solid #24466a; border-radius: 14px; background: linear-gradient(90deg, #e4f0fa, #f4faff 55%, #95b5d0 75%, #d5e8f7); }
.status { display: flex; align-items: center; padding: 6px 2px 0 5px; height: 28px; }
.refresh { width: 15px; height: 16px; margin: 0 auto 0 8px; }
.refresh svg { width: 15px; height: 16px; display: block; }
.configure { width: 125px; height: 22px; margin-right: 14px; }
.status label { margin-right: 4px; }
.layout { width: 131px; }
.actions { display: flex; gap: 21px; padding: 11px 0 0 140px; }
.actions .pill { padding-left: 12px; }
.w-a { width: 152px; } .w-b { width: 137px; } .w-c { width: 119px; } .w-d { width: 104px; } .w-e { width: 84px; }
.actions .w-e { padding-left: 27px; }
.message { height: 24px; margin-top: 18px; border: 1px solid #000; background: linear-gradient(#c60000, #5c0000); }
</style>
